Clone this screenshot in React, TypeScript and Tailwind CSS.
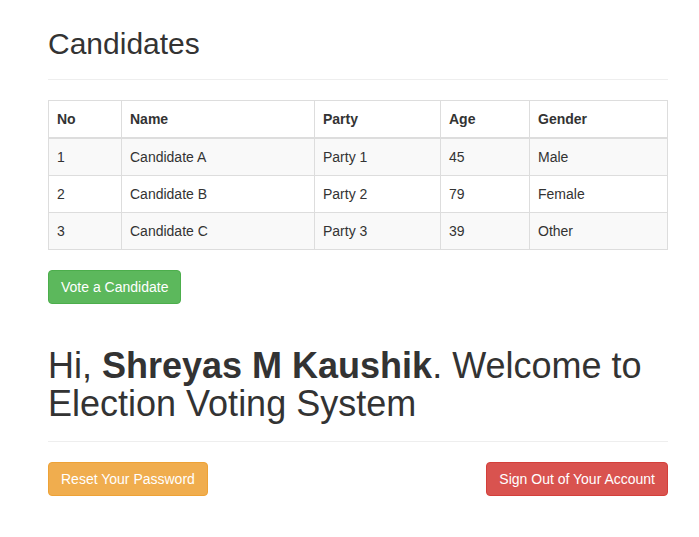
const candidates = [
  { no: 1, name: 'Candidate A', party: 'Party 1', age: 45, gender: 'Male' },
  { no: 2, name: 'Candidate B', party: 'Party 2', age: 79, gender: 'Female' },
  { no: 3, name: 'Candidate C', party: 'Party 3', age: 39, gender: 'Other' },
]

const cols = ['w-[73px]', 'w-[193px]', 'w-[126px]', 'w-[89px]', '']

export default function App() {
  return (
    <div className="min-h-screen bg-white text-[#333] text-[14px] leading-[20px] font-['Liberation_Sans',Arial,sans-serif]">
      <div className="ml-12 w-[620px] pt-[27px]">
        {/* Candidates list */}
        <div className="pb-[9px] mb-5 border-b border-[#eee]">
          <h2 className="text-[30px] leading-[33px] mb-[10px]">Candidates</h2>
        </div>

        <table className="w-full border-collapse border border-[#ddd] mb-5 table-fixed">
          <thead>
            <tr>
              {['No', 'Name', 'Party', 'Age', 'Gender'].map((h, i) => (
                <th
                  key={h}
                  className={`${cols[i]} text-left font-bold p-2 border border-[#ddd] border-b-2 align-bottom`}
                >
                  {h}
                </th>
              ))}
            </tr>
          </thead>
          <tbody>
            {candidates.map((c, i) => (
              <tr key={c.no} className={i % 2 === 0 ? 'bg-[#f9f9f9]' : 'bg-white'}>
                <td className="p-2 border border-[#ddd]">{c.no}</td>
                <td className="p-2 border border-[#ddd]">{c.name}</td>
                <td className="p-2 border border-[#ddd]">{c.party}</td>
                <td className="p-2 border border-[#ddd]">{c.age}</td>
                <td className="p-2 border border-[#ddd]">{c.gender}</td>
              </tr>
            ))}
          </tbody>
        </table>

        <button className="px-3 py-[6px] rounded-[4px] border border-[#4cae4c] bg-[#5cb85c] text-white">
          Vote a Candidate
        </button>

        {/* Welcome */}
        <div className="mt-[43px] pb-[9px] mb-5 border-b border-[#eee]">
          <h1 className="text-[36px] leading-[38px] mb-[9px]">
            Hi, <b>Shreyas M Kaushik</b>. Welcome to Election Voting System
          </h1>
        </div>

        <div className="flex justify-between">
          <button className="px-3 py-[6px] rounded-[4px] border border-[#eea236] bg-[#f0ad4e] text-white">
            Reset Your Password
          </button>
          <button className="px-3 py-[6px] rounded-[4px] border border-[#d43f3a] bg-[#d9534f] text-white">
            Sign Out of Your Account
          </button>
        </div>
      </div>
    </div>
  )
}
